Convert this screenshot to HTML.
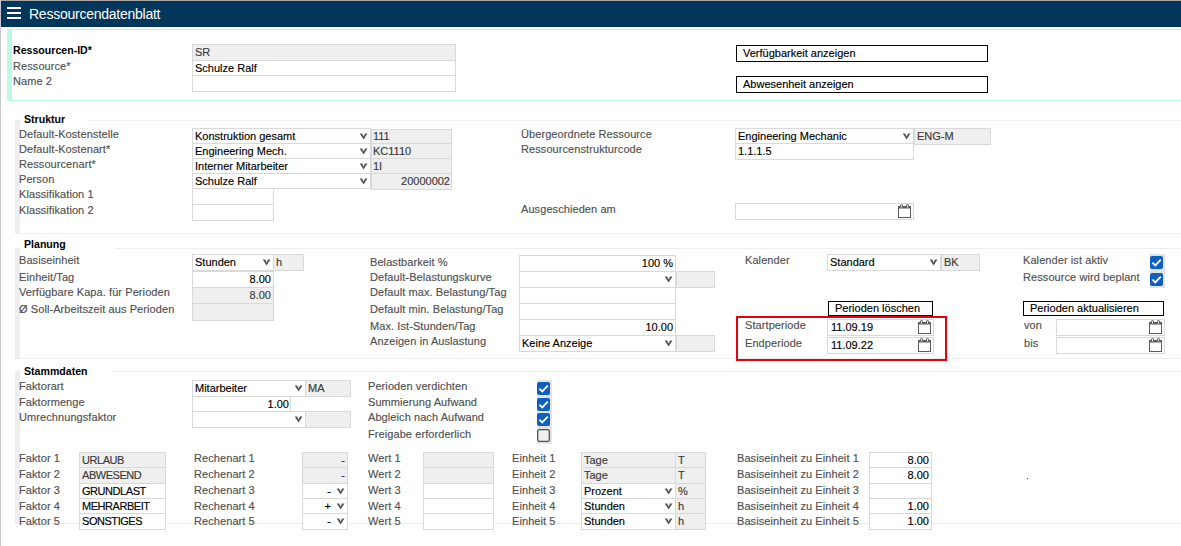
<!DOCTYPE html>
<html><head><meta charset="utf-8"><title>Ressourcendatenblatt</title>
<style>
html,body{margin:0;padding:0;}
body{width:1181px;height:546px;position:relative;overflow:hidden;background:#fff;font-family:"Liberation Sans",sans-serif;}
.t{position:absolute;white-space:nowrap;line-height:15px;-webkit-text-stroke:0.15px currentColor;}
.b{position:absolute;box-sizing:border-box;}
</style></head><body>
<div class="b" style="left:0px;top:0px;width:1181px;height:1px;background:#a8a8a8;"></div>
<div class="b" style="left:1px;top:1px;width:1180px;height:26px;background:#02365a;"></div>
<div class="b" style="left:0px;top:0px;width:1px;height:546px;background:#c9c9d6;"></div>
<div class="b" style="left:7px;top:7px;width:14px;height:2px;background:#fff;"></div>
<div class="b" style="left:7px;top:12px;width:14px;height:2px;background:#fff;"></div>
<div class="b" style="left:7px;top:17px;width:14px;height:2px;background:#fff;"></div>
<div class="t" style="left:29px;top:7px;font-size:14px;color:#fff;letter-spacing:-0.25px;-webkit-text-stroke:0;">Ressourcendatenblatt</div>
<div class="b" style="left:7px;top:29px;width:1174px;height:1px;background:#bff8e3;"></div>
<div class="b" style="left:7px;top:100px;width:1174px;height:1px;background:#bff8e3;"></div>
<div class="b" style="left:7px;top:29px;width:5px;height:72px;background:#bff8e3;"></div>
<div class="t" style="left:13px;top:43px;font-size:10.6px;color:#000;-webkit-text-stroke:0;font-weight:bold;">Ressourcen-ID*</div>
<div class="t" style="left:13px;top:59px;font-size:11px;color:#505050;letter-spacing:0.08px;">Ressource*</div>
<div class="t" style="left:13px;top:74px;font-size:11px;color:#505050;letter-spacing:0.08px;">Name 2</div>
<div class="b" style="left:192px;top:44px;width:264px;height:17px;background:#efefef;border:1px solid #d9d9d9;"></div>
<div class="b" style="left:192px;top:60px;width:264px;height:16px;background:#fff;border:1px solid #d9d9d9;"></div>
<div class="b" style="left:192px;top:75px;width:264px;height:17px;background:#fff;border:1px solid #d9d9d9;"></div>
<div class="t" style="left:195px;top:45px;font-size:11px;color:#3a3a3a;">SR</div>
<div class="t" style="left:195px;top:61px;font-size:11px;color:#000;">Schulze Ralf</div>
<div class="b" style="left:736px;top:45px;width:252px;height:17px;background:#fff;border:1px solid #000;"></div>
<div class="t" style="left:743px;top:46px;font-size:11px;color:#000;">Verfügbarkeit anzeigen</div>
<div class="b" style="left:736px;top:76px;width:252px;height:17px;background:#fff;border:1px solid #000;"></div>
<div class="t" style="left:743px;top:77px;font-size:11px;color:#000;">Abwesenheit anzeigen</div>
<div class="b" style="left:15px;top:120px;width:5px;height:114px;background:#eeeeee;"></div>
<div class="b" style="left:88px;top:120px;width:1093px;height:1px;background:#eeeeee;"></div>
<div class="b" style="left:15px;top:120px;width:7px;height:1px;background:#eeeeee;"></div>
<div class="b" style="left:15px;top:233px;width:1166px;height:1px;background:#eeeeee;"></div>
<div class="t" style="left:24px;top:112px;font-size:10.6px;color:#000;-webkit-text-stroke:0;font-weight:bold;">Struktur</div>
<div class="t" style="left:19px;top:127px;font-size:11px;color:#505050;letter-spacing:0.08px;">Default-Kostenstelle</div>
<div class="t" style="left:19px;top:142px;font-size:11px;color:#505050;letter-spacing:0.08px;">Default-Kostenart*</div>
<div class="t" style="left:19px;top:157px;font-size:11px;color:#505050;letter-spacing:0.08px;">Ressourcenart*</div>
<div class="t" style="left:19px;top:172px;font-size:11px;color:#505050;letter-spacing:0.08px;">Person</div>
<div class="t" style="left:19px;top:187px;font-size:11px;color:#505050;letter-spacing:0.08px;">Klassifikation 1</div>
<div class="t" style="left:19px;top:203px;font-size:11px;color:#505050;letter-spacing:0.08px;">Klassifikation 2</div>
<div class="b" style="left:371px;top:129px;width:81px;height:15px;background:#efefef;border:1px solid #d9d9d9;"></div>
<div class="b" style="left:192px;top:128px;width:179px;height:16px;background:#fff;border:1px solid #d9d9d9;"></div>
<div class="t" style="left:195px;top:129px;font-size:11px;color:#000;">Konstruktion gesamt</div>
<svg class="b" style="left:360px;top:132px" width="9" height="9" viewBox="0 0 9 9"><polygon points="-0.3,1.5 2.2,1.5 3.6,4.5 5.0,1.5 7.5,1.5 3.6,7.5" fill="#555"/></svg>
<div class="t" style="left:373px;top:129px;font-size:11px;color:#3a3a3a;">111</div>
<div class="b" style="left:371px;top:143px;width:81px;height:16px;background:#efefef;border:1px solid #d9d9d9;"></div>
<div class="b" style="left:192px;top:143px;width:179px;height:16px;background:#fff;border:1px solid #d9d9d9;"></div>
<div class="t" style="left:195px;top:144px;font-size:11px;color:#000;">Engineering Mech.</div>
<svg class="b" style="left:360px;top:147px" width="9" height="9" viewBox="0 0 9 9"><polygon points="-0.3,1.5 2.2,1.5 3.6,4.5 5.0,1.5 7.5,1.5 3.6,7.5" fill="#555"/></svg>
<div class="t" style="left:373px;top:144px;font-size:11px;color:#3a3a3a;">KC1110</div>
<div class="b" style="left:371px;top:158px;width:81px;height:16px;background:#efefef;border:1px solid #d9d9d9;"></div>
<div class="b" style="left:192px;top:158px;width:179px;height:16px;background:#fff;border:1px solid #d9d9d9;"></div>
<div class="t" style="left:195px;top:159px;font-size:11px;color:#000;">Interner Mitarbeiter</div>
<svg class="b" style="left:360px;top:162px" width="9" height="9" viewBox="0 0 9 9"><polygon points="-0.3,1.5 2.2,1.5 3.6,4.5 5.0,1.5 7.5,1.5 3.6,7.5" fill="#555"/></svg>
<div class="t" style="left:373px;top:159px;font-size:11px;color:#3a3a3a;">1I</div>
<div class="b" style="left:371px;top:173px;width:81px;height:17px;background:#efefef;border:1px solid #d9d9d9;"></div>
<div class="b" style="left:192px;top:173px;width:179px;height:16px;background:#fff;border:1px solid #d9d9d9;"></div>
<div class="t" style="left:195px;top:174px;font-size:11px;color:#000;">Schulze Ralf</div>
<svg class="b" style="left:360px;top:177px" width="9" height="9" viewBox="0 0 9 9"><polygon points="-0.3,1.5 2.2,1.5 3.6,4.5 5.0,1.5 7.5,1.5 3.6,7.5" fill="#555"/></svg>
<div class="t" style="right:731px;top:174px;font-size:11px;color:#3a3a3a;">20000002</div>
<div class="b" style="left:192px;top:188px;width:82px;height:17px;background:#fff;border:1px solid #d9d9d9;"></div>
<div class="b" style="left:192px;top:204px;width:82px;height:17px;background:#fff;border:1px solid #d9d9d9;"></div>
<div class="t" style="left:521px;top:127px;font-size:11px;color:#505050;letter-spacing:0.08px;">Übergeordnete Ressource</div>
<div class="t" style="left:521px;top:142px;font-size:11px;color:#505050;letter-spacing:0.08px;">Ressourcenstrukturcode</div>
<div class="t" style="left:521px;top:202px;font-size:11px;color:#505050;letter-spacing:0.08px;">Ausgeschieden am</div>
<div class="b" style="left:914px;top:128px;width:77px;height:17px;background:#efefef;border:1px solid #d9d9d9;"></div>
<div class="b" style="left:735px;top:128px;width:179px;height:16px;background:#fff;border:1px solid #d9d9d9;"></div>
<div class="t" style="left:738px;top:129px;font-size:11px;color:#000;">Engineering Mechanic</div>
<svg class="b" style="left:903px;top:132px" width="9" height="9" viewBox="0 0 9 9"><polygon points="-0.3,1.5 2.2,1.5 3.6,4.5 5.0,1.5 7.5,1.5 3.6,7.5" fill="#555"/></svg>
<div class="t" style="left:917px;top:129px;font-size:11px;color:#3a3a3a;">ENG-M</div>
<div class="b" style="left:735px;top:143px;width:179px;height:17px;background:#fff;border:1px solid #d9d9d9;"></div>
<div class="t" style="left:738px;top:144px;font-size:11px;color:#000;">1.1.1.5</div>
<div class="b" style="left:735px;top:203px;width:179px;height:17px;background:#fff;border:1px solid #d9d9d9;"></div>
<svg class="b" style="left:897px;top:203px" width="15" height="16" viewBox="0 0 15 16"><rect x="1.5" y="3.5" width="12" height="11" fill="#fff" stroke="#5c5c5c" stroke-width="1"/><rect x="1" y="3" width="13" height="2.5" fill="#5c5c5c"/><path d="M3.5 4.5 V2.2 Q3.5 1.5 4.5 1.5 Q5.5 1.5 5.5 2.2 V4.5" fill="#d8ecd8" stroke="#5c5c5c" stroke-width="1"/><path d="M9.5 4.5 V2.2 Q9.5 1.5 10.5 1.5 Q11.5 1.5 11.5 2.2 V4.5" fill="#d8ecd8" stroke="#5c5c5c" stroke-width="1"/></svg>
<div class="b" style="left:15px;top:248px;width:5px;height:111px;background:#eeeeee;"></div>
<div class="b" style="left:115px;top:248px;width:1066px;height:1px;background:#eeeeee;"></div>
<div class="b" style="left:15px;top:248px;width:7px;height:1px;background:#eeeeee;"></div>
<div class="b" style="left:15px;top:358px;width:1166px;height:1px;background:#eeeeee;"></div>
<div class="t" style="left:24px;top:237px;font-size:10.6px;color:#000;-webkit-text-stroke:0;font-weight:bold;">Planung</div>
<div class="t" style="left:19px;top:253px;font-size:11px;color:#505050;letter-spacing:0.08px;">Basiseinheit</div>
<div class="t" style="left:19px;top:270px;font-size:11px;color:#505050;letter-spacing:0.08px;">Einheit/Tag</div>
<div class="t" style="left:19px;top:285px;font-size:11px;color:#505050;letter-spacing:0.08px;">Verfügbare Kapa. für Perioden</div>
<div class="t" style="left:19px;top:302px;font-size:11px;color:#505050;letter-spacing:0.08px;">Ø Soll-Arbeitszeit aus Perioden</div>
<div class="b" style="left:273px;top:254px;width:31px;height:17px;background:#efefef;border:1px solid #d9d9d9;"></div>
<div class="b" style="left:192px;top:254px;width:82px;height:17px;background:#fff;border:1px solid #d9d9d9;"></div>
<div class="t" style="left:195px;top:255px;font-size:11px;color:#000;">Stunden</div>
<svg class="b" style="left:263px;top:258px" width="9" height="9" viewBox="0 0 9 9"><polygon points="-0.3,1.5 2.2,1.5 3.6,4.5 5.0,1.5 7.5,1.5 3.6,7.5" fill="#555"/></svg>
<div class="t" style="left:276px;top:255px;font-size:11px;color:#3a3a3a;">h</div>
<div class="b" style="left:192px;top:271px;width:82px;height:17px;background:#fff;border:1px solid #d9d9d9;"></div>
<div class="t" style="right:910px;top:272px;font-size:11px;color:#000;">8.00</div>
<div class="b" style="left:192px;top:287px;width:82px;height:17px;background:#efefef;border:1px solid #d9d9d9;"></div>
<div class="t" style="right:910px;top:288px;font-size:11px;color:#3a3a3a;">8.00</div>
<div class="b" style="left:192px;top:303px;width:82px;height:18px;background:#efefef;border:1px solid #d9d9d9;"></div>
<div class="t" style="left:370px;top:255px;font-size:11px;color:#505050;letter-spacing:0.08px;">Belastbarkeit %</div>
<div class="t" style="left:370px;top:270px;font-size:11px;color:#505050;letter-spacing:0.08px;">Default-Belastungskurve</div>
<div class="t" style="left:370px;top:285px;font-size:11px;color:#505050;letter-spacing:0.08px;">Default max. Belastung/Tag</div>
<div class="t" style="left:370px;top:302px;font-size:11px;color:#505050;letter-spacing:0.08px;">Default min. Belastung/Tag</div>
<div class="t" style="left:370px;top:319px;font-size:11px;color:#505050;letter-spacing:0.08px;">Max. Ist-Stunden/Tag</div>
<div class="t" style="left:370px;top:334px;font-size:11px;color:#505050;letter-spacing:0.08px;">Anzeigen in Auslastung</div>
<div class="b" style="left:519px;top:255px;width:157px;height:17px;background:#fff;border:1px solid #d9d9d9;"></div>
<div class="b" style="left:676px;top:271px;width:39px;height:17px;background:#efefef;border:1px solid #d9d9d9;"></div>
<div class="b" style="left:519px;top:271px;width:157px;height:17px;background:#fff;border:1px solid #d9d9d9;"></div>
<svg class="b" style="left:665px;top:275px" width="9" height="9" viewBox="0 0 9 9"><polygon points="-0.3,1.5 2.2,1.5 3.6,4.5 5.0,1.5 7.5,1.5 3.6,7.5" fill="#555"/></svg>
<div class="b" style="left:519px;top:287px;width:157px;height:17px;background:#fff;border:1px solid #d9d9d9;"></div>
<div class="b" style="left:519px;top:303px;width:157px;height:17px;background:#fff;border:1px solid #d9d9d9;"></div>
<div class="b" style="left:519px;top:319px;width:157px;height:17px;background:#fff;border:1px solid #d9d9d9;"></div>
<div class="b" style="left:676px;top:335px;width:39px;height:17px;background:#efefef;border:1px solid #d9d9d9;"></div>
<div class="b" style="left:519px;top:335px;width:157px;height:17px;background:#fff;border:1px solid #d9d9d9;"></div>
<svg class="b" style="left:665px;top:339px" width="9" height="9" viewBox="0 0 9 9"><polygon points="-0.3,1.5 2.2,1.5 3.6,4.5 5.0,1.5 7.5,1.5 3.6,7.5" fill="#555"/></svg>
<div class="t" style="right:508px;top:256px;font-size:11px;color:#000;">100 %</div>
<div class="t" style="right:508px;top:320px;font-size:11px;color:#000;">10.00</div>
<div class="t" style="left:522px;top:336px;font-size:11px;color:#000;">Keine Anzeige</div>
<div class="t" style="left:745px;top:253px;font-size:11px;color:#505050;letter-spacing:0.08px;">Kalender</div>
<div class="b" style="left:941px;top:254px;width:39px;height:17px;background:#efefef;border:1px solid #d9d9d9;"></div>
<div class="b" style="left:827px;top:254px;width:114px;height:17px;background:#fff;border:1px solid #d9d9d9;"></div>
<div class="t" style="left:830px;top:255px;font-size:11px;color:#000;">Standard</div>
<svg class="b" style="left:930px;top:258px" width="9" height="9" viewBox="0 0 9 9"><polygon points="-0.3,1.5 2.2,1.5 3.6,4.5 5.0,1.5 7.5,1.5 3.6,7.5" fill="#555"/></svg>
<div class="t" style="left:944px;top:255px;font-size:11px;color:#3a3a3a;">BK</div>
<div class="b" style="left:828px;top:301px;width:105px;height:15px;background:#fff;border:1px solid #000;"></div>
<div class="t" style="left:835px;top:301px;font-size:11px;color:#000;">Perioden löschen</div>
<div class="b" style="left:736px;top:316px;width:211px;height:45px;border:2px solid #e5000f;"></div>
<div class="t" style="left:745px;top:318px;font-size:11px;color:#505050;letter-spacing:0.08px;">Startperiode</div>
<div class="t" style="left:745px;top:336px;font-size:11px;color:#505050;letter-spacing:0.08px;">Endperiode</div>
<div class="b" style="left:827px;top:319px;width:107px;height:17px;background:#fff;border:1px solid #d9d9d9;"></div>
<div class="b" style="left:827px;top:337px;width:107px;height:17px;background:#fff;border:1px solid #d9d9d9;"></div>
<div class="t" style="left:831px;top:320px;font-size:11px;color:#000;">11.09.19</div>
<div class="t" style="left:831px;top:338px;font-size:11px;color:#000;">11.09.22</div>
<svg class="b" style="left:917px;top:319px" width="15" height="16" viewBox="0 0 15 16"><rect x="1.5" y="3.5" width="12" height="11" fill="#fff" stroke="#5c5c5c" stroke-width="1"/><rect x="1" y="3" width="13" height="2.5" fill="#5c5c5c"/><path d="M3.5 4.5 V2.2 Q3.5 1.5 4.5 1.5 Q5.5 1.5 5.5 2.2 V4.5" fill="#d8ecd8" stroke="#5c5c5c" stroke-width="1"/><path d="M9.5 4.5 V2.2 Q9.5 1.5 10.5 1.5 Q11.5 1.5 11.5 2.2 V4.5" fill="#d8ecd8" stroke="#5c5c5c" stroke-width="1"/></svg>
<svg class="b" style="left:917px;top:337px" width="15" height="16" viewBox="0 0 15 16"><rect x="1.5" y="3.5" width="12" height="11" fill="#fff" stroke="#5c5c5c" stroke-width="1"/><rect x="1" y="3" width="13" height="2.5" fill="#5c5c5c"/><path d="M3.5 4.5 V2.2 Q3.5 1.5 4.5 1.5 Q5.5 1.5 5.5 2.2 V4.5" fill="#d8ecd8" stroke="#5c5c5c" stroke-width="1"/><path d="M9.5 4.5 V2.2 Q9.5 1.5 10.5 1.5 Q11.5 1.5 11.5 2.2 V4.5" fill="#d8ecd8" stroke="#5c5c5c" stroke-width="1"/></svg>
<div class="t" style="left:1023px;top:253px;font-size:11px;color:#505050;letter-spacing:0.08px;">Kalender ist aktiv</div>
<div class="t" style="left:1023px;top:270px;font-size:11px;color:#505050;letter-spacing:0.08px;">Ressource wird beplant</div>
<div class="b" style="left:1150px;top:254px;width:15px;height:34px;background:#e3e3e3;"></div>
<svg class="b" style="left:1150px;top:256px" width="14" height="14" viewBox="0 0 14 14"><rect x="0" y="0" width="13" height="13" rx="2" fill="#0f5fc0"/><path d="M2.4 6.6 L5.3 9.4 L10.8 3.7" fill="none" stroke="#fff" stroke-width="1.8"/></svg>
<svg class="b" style="left:1150px;top:273px" width="14" height="14" viewBox="0 0 14 14"><rect x="0" y="0" width="13" height="13" rx="2" fill="#0f5fc0"/><path d="M2.4 6.6 L5.3 9.4 L10.8 3.7" fill="none" stroke="#fff" stroke-width="1.8"/></svg>
<div class="b" style="left:1023px;top:301px;width:141px;height:15px;background:#fff;border:1px solid #000;"></div>
<div class="t" style="left:1030px;top:301px;font-size:11px;color:#000;">Perioden aktualisieren</div>
<div class="t" style="left:1024px;top:318px;font-size:11px;color:#505050;letter-spacing:0.08px;">von</div>
<div class="t" style="left:1024px;top:336px;font-size:11px;color:#505050;letter-spacing:0.08px;">bis</div>
<div class="b" style="left:1056px;top:319px;width:109px;height:17px;background:#fff;border:1px solid #d9d9d9;"></div>
<div class="b" style="left:1056px;top:337px;width:109px;height:17px;background:#fff;border:1px solid #d9d9d9;"></div>
<svg class="b" style="left:1148px;top:319px" width="15" height="16" viewBox="0 0 15 16"><rect x="1.5" y="3.5" width="12" height="11" fill="#fff" stroke="#5c5c5c" stroke-width="1"/><rect x="1" y="3" width="13" height="2.5" fill="#5c5c5c"/><path d="M3.5 4.5 V2.2 Q3.5 1.5 4.5 1.5 Q5.5 1.5 5.5 2.2 V4.5" fill="#d8ecd8" stroke="#5c5c5c" stroke-width="1"/><path d="M9.5 4.5 V2.2 Q9.5 1.5 10.5 1.5 Q11.5 1.5 11.5 2.2 V4.5" fill="#d8ecd8" stroke="#5c5c5c" stroke-width="1"/></svg>
<svg class="b" style="left:1148px;top:337px" width="15" height="16" viewBox="0 0 15 16"><rect x="1.5" y="3.5" width="12" height="11" fill="#fff" stroke="#5c5c5c" stroke-width="1"/><rect x="1" y="3" width="13" height="2.5" fill="#5c5c5c"/><path d="M3.5 4.5 V2.2 Q3.5 1.5 4.5 1.5 Q5.5 1.5 5.5 2.2 V4.5" fill="#d8ecd8" stroke="#5c5c5c" stroke-width="1"/><path d="M9.5 4.5 V2.2 Q9.5 1.5 10.5 1.5 Q11.5 1.5 11.5 2.2 V4.5" fill="#d8ecd8" stroke="#5c5c5c" stroke-width="1"/></svg>
<div class="b" style="left:15px;top:371px;width:5px;height:153px;background:#eeeeee;"></div>
<div class="b" style="left:112px;top:371px;width:1069px;height:1px;background:#eeeeee;"></div>
<div class="b" style="left:15px;top:371px;width:7px;height:1px;background:#eeeeee;"></div>
<div class="b" style="left:15px;top:523px;width:1166px;height:1px;background:#eeeeee;"></div>
<div class="t" style="left:24px;top:364px;font-size:10.6px;color:#000;-webkit-text-stroke:0;font-weight:bold;">Stammdaten</div>
<div class="t" style="left:19px;top:379px;font-size:11px;color:#505050;letter-spacing:0.08px;">Faktorart</div>
<div class="t" style="left:19px;top:395px;font-size:11px;color:#505050;letter-spacing:0.08px;">Faktormenge</div>
<div class="t" style="left:19px;top:410px;font-size:11px;color:#505050;letter-spacing:0.08px;">Umrechnungsfaktor</div>
<div class="b" style="left:305px;top:380px;width:46px;height:17px;background:#efefef;border:1px solid #d9d9d9;"></div>
<div class="b" style="left:192px;top:380px;width:114px;height:17px;background:#fff;border:1px solid #d9d9d9;"></div>
<div class="t" style="left:195px;top:381px;font-size:11px;color:#000;">Mitarbeiter</div>
<svg class="b" style="left:295px;top:384px" width="9" height="9" viewBox="0 0 9 9"><polygon points="-0.3,1.5 2.2,1.5 3.6,4.5 5.0,1.5 7.5,1.5 3.6,7.5" fill="#555"/></svg>
<div class="t" style="left:308px;top:381px;font-size:11px;color:#3a3a3a;">MA</div>
<div class="b" style="left:192px;top:396px;width:99px;height:16px;background:#fff;border:1px solid #d9d9d9;"></div>
<div class="t" style="right:892px;top:397px;font-size:11px;color:#000;">1.00</div>
<div class="b" style="left:305px;top:411px;width:46px;height:17px;background:#efefef;border:1px solid #d9d9d9;"></div>
<div class="b" style="left:192px;top:411px;width:114px;height:17px;background:#fff;border:1px solid #d9d9d9;"></div>
<svg class="b" style="left:295px;top:415px" width="9" height="9" viewBox="0 0 9 9"><polygon points="-0.3,1.5 2.2,1.5 3.6,4.5 5.0,1.5 7.5,1.5 3.6,7.5" fill="#555"/></svg>
<div class="t" style="left:368px;top:379px;font-size:11px;color:#505050;letter-spacing:0.08px;">Perioden verdichten</div>
<div class="t" style="left:368px;top:395px;font-size:11px;color:#505050;letter-spacing:0.08px;">Summierung Aufwand</div>
<div class="t" style="left:368px;top:410px;font-size:11px;color:#505050;letter-spacing:0.08px;">Abgleich nach Aufwand</div>
<div class="t" style="left:368px;top:427px;font-size:11px;color:#505050;letter-spacing:0.08px;">Freigabe erforderlich</div>
<div class="b" style="left:537px;top:380px;width:15px;height:64px;background:#e3e3e3;"></div>
<svg class="b" style="left:537px;top:382px" width="14" height="14" viewBox="0 0 14 14"><rect x="0" y="0" width="13" height="13" rx="2" fill="#0f5fc0"/><path d="M2.4 6.6 L5.3 9.4 L10.8 3.7" fill="none" stroke="#fff" stroke-width="1.8"/></svg>
<svg class="b" style="left:537px;top:398px" width="14" height="14" viewBox="0 0 14 14"><rect x="0" y="0" width="13" height="13" rx="2" fill="#0f5fc0"/><path d="M2.4 6.6 L5.3 9.4 L10.8 3.7" fill="none" stroke="#fff" stroke-width="1.8"/></svg>
<svg class="b" style="left:537px;top:413px" width="14" height="14" viewBox="0 0 14 14"><rect x="0" y="0" width="13" height="13" rx="2" fill="#0f5fc0"/><path d="M2.4 6.6 L5.3 9.4 L10.8 3.7" fill="none" stroke="#fff" stroke-width="1.8"/></svg>
<svg class="b" style="left:537px;top:429px" width="14" height="14" viewBox="0 0 14 14"><rect x="0.7" y="0.7" width="11.6" height="11.6" rx="1.5" fill="#f0f0f0" stroke="#505050" stroke-width="1.3"/></svg>
<div class="t" style="left:19px;top:451px;font-size:11px;color:#505050;letter-spacing:0.08px;">Faktor 1</div>
<div class="b" style="left:79px;top:452px;width:87px;height:16px;background:#efefef;border:1px solid #d9d9d9;"></div>
<div class="t" style="left:82px;top:453px;font-size:11px;color:#3a3a3a;letter-spacing:-0.45px;">URLAUB</div>
<div class="t" style="left:194px;top:451px;font-size:11px;color:#505050;letter-spacing:0.08px;">Rechenart 1</div>
<div class="b" style="left:302px;top:452px;width:46px;height:16px;background:#efefef;border:1px solid #d9d9d9;"></div>
<div class="t" style="right:836px;top:453px;font-size:11px;color:#3a3a3a;">-</div>
<div class="t" style="left:368px;top:451px;font-size:11px;color:#505050;letter-spacing:0.08px;">Wert 1</div>
<div class="b" style="left:423px;top:452px;width:71px;height:16px;background:#efefef;border:1px solid #d9d9d9;"></div>
<div class="t" style="left:512px;top:451px;font-size:11px;color:#505050;letter-spacing:0.08px;">Einheit 1</div>
<div class="b" style="left:675px;top:452px;width:31px;height:16px;background:#efefef;border:1px solid #d9d9d9;"></div>
<div class="b" style="left:581px;top:452px;width:95px;height:16px;background:#efefef;border:1px solid #d9d9d9;"></div>
<div class="t" style="left:584px;top:453px;font-size:11px;color:#3a3a3a;">Tage</div>
<div class="t" style="left:678px;top:453px;font-size:11px;color:#3a3a3a;">T</div>
<div class="t" style="left:737px;top:451px;font-size:11px;color:#505050;letter-spacing:0.08px;">Basiseinheit zu Einheit 1</div>
<div class="b" style="left:869px;top:452px;width:63px;height:16px;background:#fff;border:1px solid #d9d9d9;"></div>
<div class="t" style="right:252px;top:453px;font-size:11px;color:#000;">8.00</div>
<div class="t" style="left:19px;top:467px;font-size:11px;color:#505050;letter-spacing:0.08px;">Faktor 2</div>
<div class="b" style="left:79px;top:467px;width:87px;height:17px;background:#efefef;border:1px solid #d9d9d9;"></div>
<div class="t" style="left:82px;top:468px;font-size:11px;color:#3a3a3a;letter-spacing:-0.45px;">ABWESEND</div>
<div class="t" style="left:194px;top:467px;font-size:11px;color:#505050;letter-spacing:0.08px;">Rechenart 2</div>
<div class="b" style="left:302px;top:467px;width:46px;height:17px;background:#efefef;border:1px solid #d9d9d9;"></div>
<div class="t" style="right:836px;top:468px;font-size:11px;color:#3a3a3a;">-</div>
<div class="t" style="left:368px;top:467px;font-size:11px;color:#505050;letter-spacing:0.08px;">Wert 2</div>
<div class="b" style="left:423px;top:467px;width:71px;height:17px;background:#efefef;border:1px solid #d9d9d9;"></div>
<div class="t" style="left:512px;top:467px;font-size:11px;color:#505050;letter-spacing:0.08px;">Einheit 2</div>
<div class="b" style="left:675px;top:467px;width:31px;height:17px;background:#efefef;border:1px solid #d9d9d9;"></div>
<div class="b" style="left:581px;top:467px;width:95px;height:17px;background:#efefef;border:1px solid #d9d9d9;"></div>
<div class="t" style="left:584px;top:468px;font-size:11px;color:#3a3a3a;">Tage</div>
<div class="t" style="left:678px;top:468px;font-size:11px;color:#3a3a3a;">T</div>
<div class="t" style="left:737px;top:467px;font-size:11px;color:#505050;letter-spacing:0.08px;">Basiseinheit zu Einheit 2</div>
<div class="b" style="left:869px;top:467px;width:63px;height:17px;background:#fff;border:1px solid #d9d9d9;"></div>
<div class="t" style="right:252px;top:468px;font-size:11px;color:#000;">8.00</div>
<div class="t" style="left:19px;top:483px;font-size:11px;color:#505050;letter-spacing:0.08px;">Faktor 3</div>
<div class="b" style="left:79px;top:483px;width:87px;height:16px;background:#fff;border:1px solid #d9d9d9;"></div>
<div class="t" style="left:82px;top:484px;font-size:11px;color:#000;letter-spacing:-0.45px;">GRUNDLAST</div>
<div class="t" style="left:194px;top:483px;font-size:11px;color:#505050;letter-spacing:0.08px;">Rechenart 3</div>
<div class="b" style="left:302px;top:483px;width:46px;height:16px;background:#fff;border:1px solid #d9d9d9;"></div>
<div class="t" style="right:850px;top:484px;font-size:11px;color:#000;">-</div>
<svg class="b" style="left:337px;top:487px" width="9" height="9" viewBox="0 0 9 9"><polygon points="-0.3,1.5 2.2,1.5 3.6,4.5 5.0,1.5 7.5,1.5 3.6,7.5" fill="#555"/></svg>
<div class="t" style="left:368px;top:483px;font-size:11px;color:#505050;letter-spacing:0.08px;">Wert 3</div>
<div class="b" style="left:423px;top:483px;width:71px;height:16px;background:#fff;border:1px solid #d9d9d9;"></div>
<div class="t" style="left:512px;top:483px;font-size:11px;color:#505050;letter-spacing:0.08px;">Einheit 3</div>
<div class="b" style="left:675px;top:483px;width:31px;height:16px;background:#efefef;border:1px solid #d9d9d9;"></div>
<div class="b" style="left:581px;top:483px;width:95px;height:16px;background:#fff;border:1px solid #d9d9d9;"></div>
<div class="t" style="left:584px;top:484px;font-size:11px;color:#000;">Prozent</div>
<svg class="b" style="left:665px;top:487px" width="9" height="9" viewBox="0 0 9 9"><polygon points="-0.3,1.5 2.2,1.5 3.6,4.5 5.0,1.5 7.5,1.5 3.6,7.5" fill="#555"/></svg>
<div class="t" style="left:678px;top:484px;font-size:11px;color:#3a3a3a;">%</div>
<div class="t" style="left:737px;top:483px;font-size:11px;color:#505050;letter-spacing:0.08px;">Basiseinheit zu Einheit 3</div>
<div class="b" style="left:869px;top:483px;width:63px;height:16px;background:#fff;border:1px solid #d9d9d9;"></div>
<div class="t" style="left:19px;top:499px;font-size:11px;color:#505050;letter-spacing:0.08px;">Faktor 4</div>
<div class="b" style="left:79px;top:498px;width:87px;height:16px;background:#fff;border:1px solid #d9d9d9;"></div>
<div class="t" style="left:82px;top:499px;font-size:11px;color:#000;letter-spacing:-0.45px;">MEHRARBEIT</div>
<div class="t" style="left:194px;top:499px;font-size:11px;color:#505050;letter-spacing:0.08px;">Rechenart 4</div>
<div class="b" style="left:302px;top:498px;width:46px;height:16px;background:#fff;border:1px solid #d9d9d9;"></div>
<div class="t" style="right:850px;top:499px;font-size:11px;color:#000;">+</div>
<svg class="b" style="left:337px;top:502px" width="9" height="9" viewBox="0 0 9 9"><polygon points="-0.3,1.5 2.2,1.5 3.6,4.5 5.0,1.5 7.5,1.5 3.6,7.5" fill="#555"/></svg>
<div class="t" style="left:368px;top:499px;font-size:11px;color:#505050;letter-spacing:0.08px;">Wert 4</div>
<div class="b" style="left:423px;top:498px;width:71px;height:16px;background:#fff;border:1px solid #d9d9d9;"></div>
<div class="t" style="left:512px;top:499px;font-size:11px;color:#505050;letter-spacing:0.08px;">Einheit 4</div>
<div class="b" style="left:675px;top:498px;width:31px;height:16px;background:#efefef;border:1px solid #d9d9d9;"></div>
<div class="b" style="left:581px;top:498px;width:95px;height:16px;background:#fff;border:1px solid #d9d9d9;"></div>
<div class="t" style="left:584px;top:499px;font-size:11px;color:#000;">Stunden</div>
<svg class="b" style="left:665px;top:502px" width="9" height="9" viewBox="0 0 9 9"><polygon points="-0.3,1.5 2.2,1.5 3.6,4.5 5.0,1.5 7.5,1.5 3.6,7.5" fill="#555"/></svg>
<div class="t" style="left:678px;top:499px;font-size:11px;color:#3a3a3a;">h</div>
<div class="t" style="left:737px;top:499px;font-size:11px;color:#505050;letter-spacing:0.08px;">Basiseinheit zu Einheit 4</div>
<div class="b" style="left:869px;top:498px;width:63px;height:16px;background:#fff;border:1px solid #d9d9d9;"></div>
<div class="t" style="right:252px;top:499px;font-size:11px;color:#000;">1.00</div>
<div class="t" style="left:19px;top:514px;font-size:11px;color:#505050;letter-spacing:0.08px;">Faktor 5</div>
<div class="b" style="left:79px;top:513px;width:87px;height:17px;background:#fff;border:1px solid #d9d9d9;"></div>
<div class="t" style="left:82px;top:514px;font-size:11px;color:#000;letter-spacing:-0.45px;">SONSTIGES</div>
<div class="t" style="left:194px;top:514px;font-size:11px;color:#505050;letter-spacing:0.08px;">Rechenart 5</div>
<div class="b" style="left:302px;top:513px;width:46px;height:17px;background:#fff;border:1px solid #d9d9d9;"></div>
<div class="t" style="right:850px;top:514px;font-size:11px;color:#000;">-</div>
<svg class="b" style="left:337px;top:517px" width="9" height="9" viewBox="0 0 9 9"><polygon points="-0.3,1.5 2.2,1.5 3.6,4.5 5.0,1.5 7.5,1.5 3.6,7.5" fill="#555"/></svg>
<div class="t" style="left:368px;top:514px;font-size:11px;color:#505050;letter-spacing:0.08px;">Wert 5</div>
<div class="b" style="left:423px;top:513px;width:71px;height:17px;background:#fff;border:1px solid #d9d9d9;"></div>
<div class="t" style="left:512px;top:514px;font-size:11px;color:#505050;letter-spacing:0.08px;">Einheit 5</div>
<div class="b" style="left:675px;top:513px;width:31px;height:17px;background:#efefef;border:1px solid #d9d9d9;"></div>
<div class="b" style="left:581px;top:513px;width:95px;height:17px;background:#fff;border:1px solid #d9d9d9;"></div>
<div class="t" style="left:584px;top:514px;font-size:11px;color:#000;">Stunden</div>
<svg class="b" style="left:665px;top:517px" width="9" height="9" viewBox="0 0 9 9"><polygon points="-0.3,1.5 2.2,1.5 3.6,4.5 5.0,1.5 7.5,1.5 3.6,7.5" fill="#555"/></svg>
<div class="t" style="left:678px;top:514px;font-size:11px;color:#3a3a3a;">h</div>
<div class="t" style="left:737px;top:514px;font-size:11px;color:#505050;letter-spacing:0.08px;">Basiseinheit zu Einheit 5</div>
<div class="b" style="left:869px;top:513px;width:63px;height:17px;background:#fff;border:1px solid #d9d9d9;"></div>
<div class="t" style="right:252px;top:514px;font-size:11px;color:#000;">1.00</div>
<div class="b" style="left:1027px;top:478px;width:1px;height:1px;background:#e00000;"></div>
</body></html>
